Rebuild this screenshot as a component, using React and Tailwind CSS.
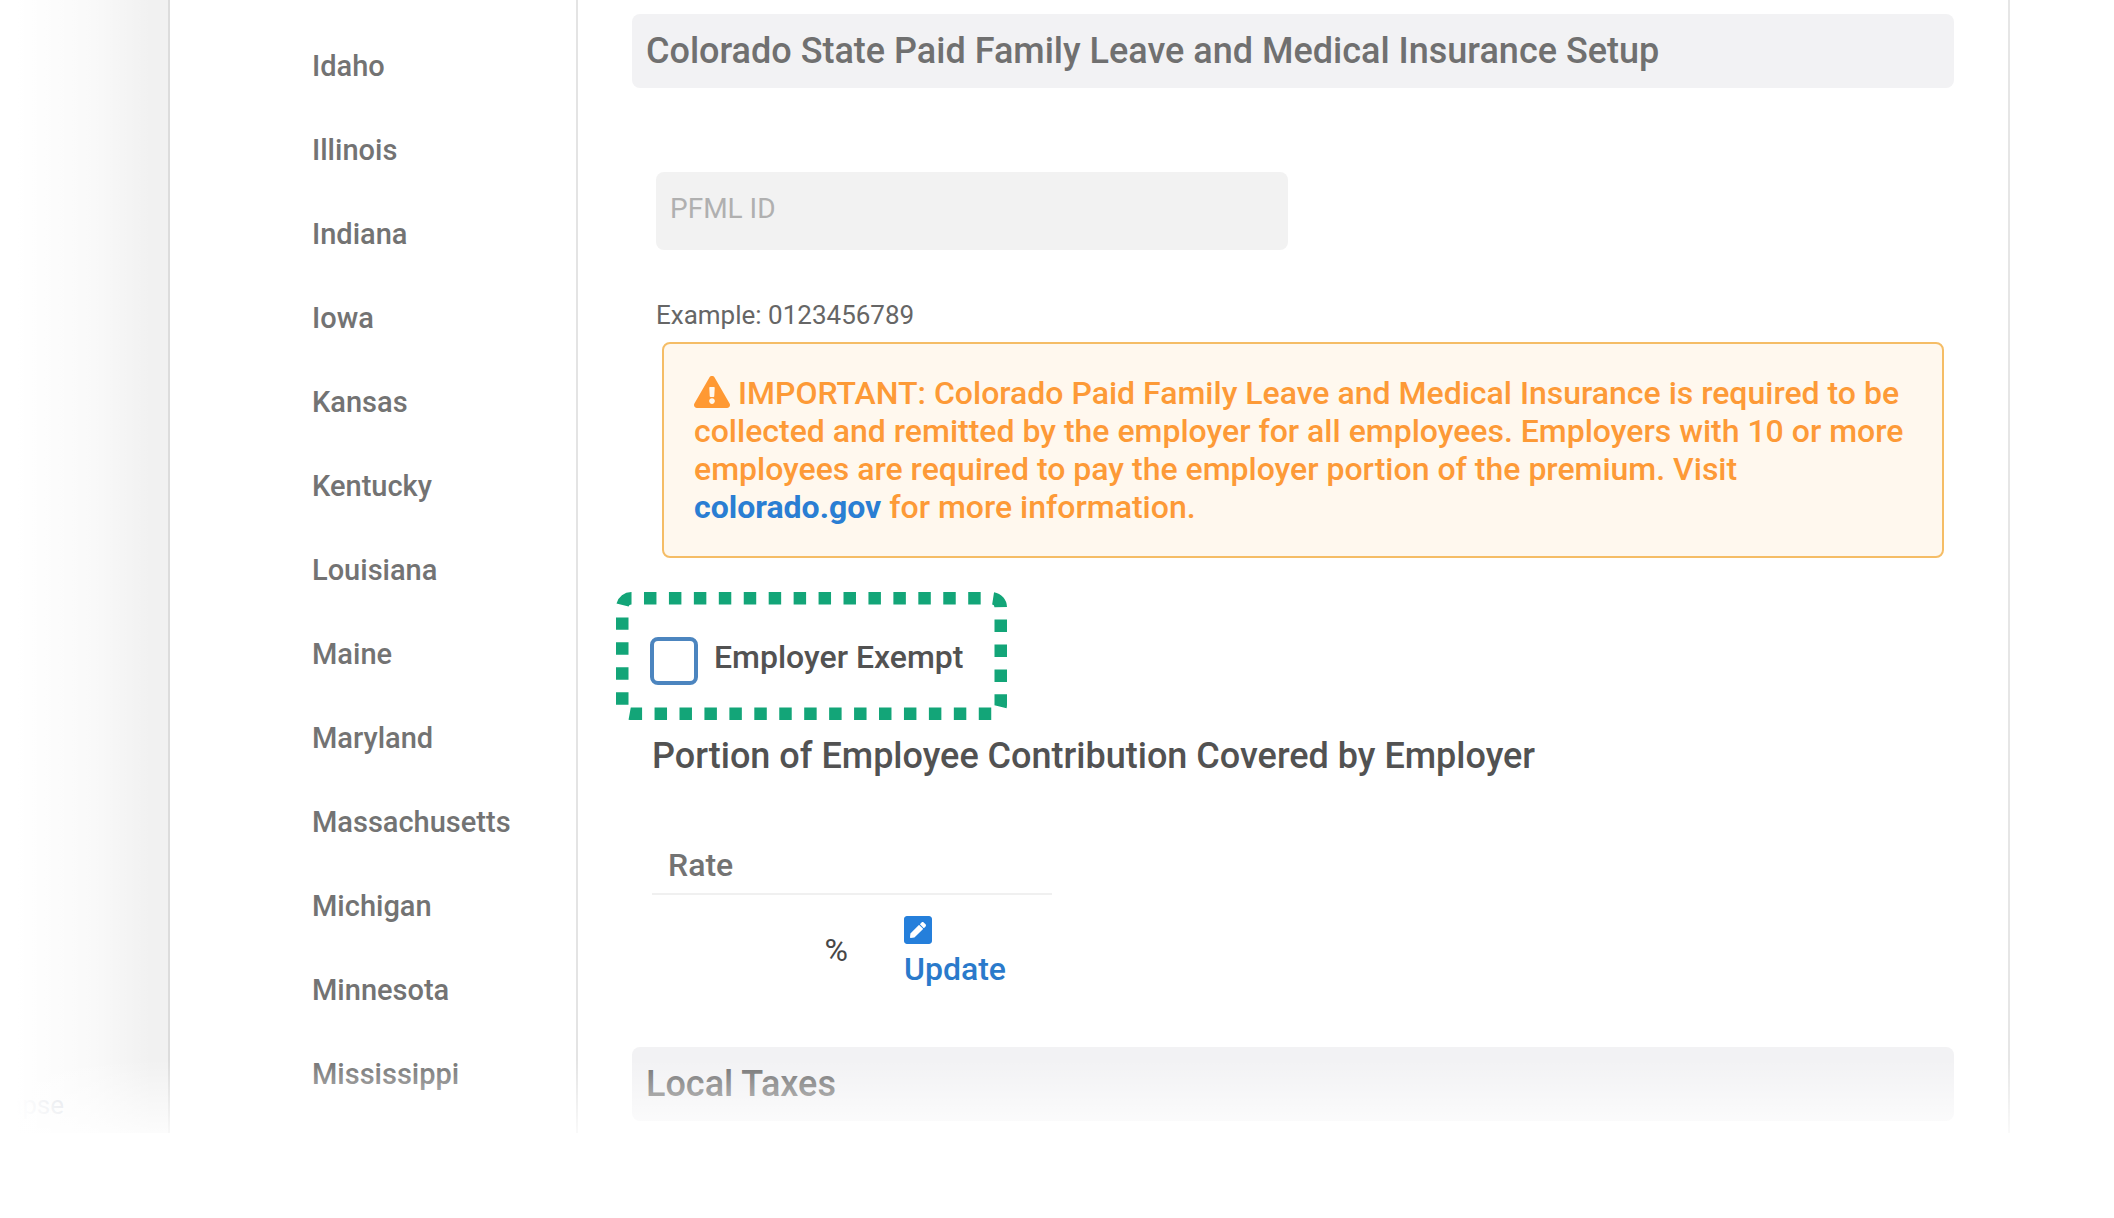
import React, { useState } from "react";
import { FaExclamationTriangle, FaPenSquare } from "react-icons/fa";

const states = [
  "Idaho",
  "Illinois",
  "Indiana",
  "Iowa",
  "Kansas",
  "Kentucky",
  "Louisiana",
  "Maine",
  "Maryland",
  "Massachusetts",
  "Michigan",
  "Minnesota",
  "Mississippi",
];

// Grey bar that opens each section of the form
const SectionTitle = ({ children }) => (
  <h2 className="h-[74px] rounded-lg bg-[#f2f2f4] px-[14px] text-4xl leading-[74px] font-medium text-[#707070]">
    {children}
  </h2>
);

const SideNav = () => (
  <aside className="relative flex w-[170px] shrink-0 flex-col justify-end overflow-hidden border-r-2 border-[#dcdcdc] bg-[#f1f1f1]">
    <button className="mb-2 w-16 text-right text-[26px] leading-10 text-[#66738f]">
      apse
    </button>
    {/* Fades the nav out towards the window edge */}
    <div className="pointer-events-none absolute inset-0 bg-linear-to-r from-white from-10% via-white/60 via-55% to-white/0 to-90%"></div>
  </aside>
);

const StateList = () => (
  <nav className="w-[408px] shrink-0 border-r-2 border-[#e4e4e4] pt-6 pl-[142px]">
    <ul>
      {states.map((state) => (
        <li key={state} className="h-[84px]">
          <a
            href="#"
            className="text-[29px] leading-[84px] font-medium text-[#737373]"
          >
            {state}
          </a>
        </li>
      ))}
    </ul>
  </nav>
);

const Notice = () => (
  <div className="mt-2 mr-[10px] ml-[30px] rounded-lg border-2 border-[#f5bd66] bg-[#fff8ee] p-[30px] text-[32px] leading-[38px] font-medium text-[#fd9a37]">
    <p>
      <FaExclamationTriangle className="mr-2 inline h-8 w-9 align-[-4px] text-[#ff9933]" />
      IMPORTANT: Colorado Paid Family Leave and Medical Insurance is required to
      be collected and remitted by the employer for all employees. Employers
      with 10 or more employees are required to pay the employer portion of the
      premium. Visit{" "}
      <a href="#" className="font-bold text-[#2a7ed3]">
        colorado.gov
      </a>{" "}
      for more information.
    </p>
  </div>
);

const ExemptBox = () => {
  const [exempt, setExempt] = useState(false);

  return (
    <div className="relative -ml-4 mt-[34px] flex h-[128px] w-[391px] items-center gap-4 pt-0.5 pl-[34px]">
      {/* Dashed highlight round the check box */}
      <svg
        className="pointer-events-none absolute inset-0"
        width="391"
        height="128"
        viewBox="0 0 391 128"
        fill="none"
      >
        <rect
          x="6.25"
          y="6.25"
          width="378.5"
          height="115.5"
          rx="9"
          stroke="#13a578"
          strokeWidth="12.5"
          strokeDasharray="12.47 12.47"
          strokeDashoffset="12.2"
        />
      </svg>
      <input
        id="exempt"
        type="checkbox"
        checked={exempt}
        onChange={() => setExempt(!exempt)}
        className="mt-2 h-12 w-12 appearance-none rounded-lg border-4 border-[#4c85bf] bg-white checked:bg-[#4c85bf]"
      />
      <label
        htmlFor="exempt"
        className="text-[32px] leading-10 font-medium text-[#525252]"
      >
        Employer Exempt
      </label>
    </div>
  );
};

const RateTable = () => (
  <table className="mt-14 ml-5 w-[400px] table-fixed text-left">
    <thead>
      <tr className="h-[58px] border-b-2 border-[#f0f0f0]">
        <th className="w-[236px] px-4 text-[32px] leading-10 font-medium text-[#737373]">
          Rate
        </th>
        <th></th>
      </tr>
    </thead>
    <tbody>
      <tr className="h-[114px]">
        <td className="pr-10 pb-1 text-right text-[32px] leading-10 text-[#474747]">
          %
        </td>
        <td className="pl-4 align-middle">
          <a
            href="#"
            className="flex flex-col items-start gap-0.5 text-[32px] leading-[42px] font-medium text-[#2a7acb]"
          >
            <FaPenSquare className="h-8 w-7 text-[#257fdb]" />
            Update
          </a>
        </td>
      </tr>
    </tbody>
  </table>
);

export default function App() {
  const [pfmlId, setPfmlId] = useState("");

  return (
    <div className="min-h-screen bg-white font-[Roboto,sans-serif]">
      <div className="relative mr-[104px] flex overflow-hidden">
        <SideNav />
        <StateList />
        <main className="min-w-0 grow border-r-2 border-[#e6e6e6] pt-[14px] pr-[54px] pb-3 pl-[54px]">
          <SectionTitle>
            Colorado State Paid Family Leave and Medical Insurance Setup
          </SectionTitle>

          <div className="mt-[84px] ml-6">
            <input
              type="text"
              aria-label="PFML ID"
              placeholder="PFML ID"
              value={pfmlId}
              onChange={(e) => setPfmlId(e.target.value)}
              className="block h-[78px] w-[632px] rounded-lg bg-[#f2f2f2] px-[14px] pb-1.5 text-[28px] text-[#525252] placeholder:text-[#b0b0b0]"
            />
            <p className="mt-[46px] text-[26px] leading-[38px] text-[#666666]">
              Example: 0123456789
            </p>
          </div>

          <Notice />
          <ExemptBox />

          <h3 className="mt-3 ml-5 text-4xl leading-[48px] font-medium text-[#525252]">
            Portion of Employee Contribution Covered by Employer
          </h3>
          <RateTable />

          <div className="mt-[39px]">
            <SectionTitle>Local Taxes</SectionTitle>
          </div>
        </main>
        <div className="pointer-events-none absolute inset-x-0 bottom-0 h-[74px] bg-linear-to-b from-white/0 to-white/80"></div>
      </div>
    </div>
  );
}
